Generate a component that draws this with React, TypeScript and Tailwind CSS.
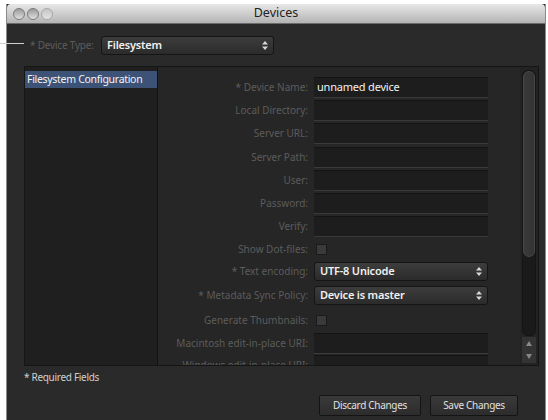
import React from 'react';

const font = { fontFamily: '"Noto Sans", "DejaVu Sans", sans-serif' };

const Arrows: React.FC = () => (
  <svg width="6" height="9" viewBox="0 0 6 9" className="shrink-0">
    <path d="M3 0 L6 3.5 L0 3.5 Z" fill="#d8d8d8" />
    <path d="M3 9 L6 5.5 L0 5.5 Z" fill="#d8d8d8" />
  </svg>
);

const Select: React.FC<{ value: string; className?: string }> = ({ value, className = '' }) => (
  <div
    className={`flex items-center justify-between h-[19px] px-[5px] rounded-[3px] border border-[#151515] bg-gradient-to-b from-[#3d3d3d] to-[#2b2b2b] text-[#f0f0f0] text-[11px] font-semibold tracking-[-0.2px] ${className}`}
  >
    <span>{value}</span>
    <Arrows />
  </div>
);

const Field: React.FC<{ label: string; h: string; children?: React.ReactNode }> = ({ label, h, children }) => (
  <div className={`flex items-center ${h}`}>
    <div className="w-[156px] pr-[6px] text-right text-[10px] text-[#5c5c5c] whitespace-nowrap">{label}</div>
    {children}
  </div>
);

const Input: React.FC<{ value?: string }> = ({ value }) => (
  <div className="w-[174px] h-[21px] bg-[#1d1d1d] border-t border-t-[#141414] border-b border-b-[#3a3a3a] flex items-center px-[3px] text-[11px] tracking-[-0.2px] text-[#f2f2f2]">
    {value}
  </div>
);

const Check: React.FC = () => (
  <div className="ml-[2px] w-[11px] h-[11px] bg-[#3a3a3a] border border-[#1a1a1a]" />
);

export default function App() {
  return (
    <div className="w-[548px] h-[420px] bg-white relative overflow-hidden" style={font}>
      <div className="absolute left-0 top-[43px] w-[24px] h-[1px] bg-[#cfcfcf] z-10" />
      <div className="ml-[6px] mt-[4px] w-[540px] h-[416px] flex flex-col bg-[#2a2a2a] border-l border-r border-[#8a8a8a]">
        {/* title bar */}
        <div className="relative h-[20px] flex items-center justify-center bg-gradient-to-b from-[#e8e8e8] to-[#b4b4b4] border-b border-[#6b6b6b] rounded-t-[4px]">
          <div className="absolute left-[6px] top-[4px] flex gap-[2px]">
            <div className="w-[12px] h-[12px] rounded-full bg-gradient-to-b from-[#9a9a9a] to-[#e0e0e0] border border-[#7a7a7a]" />
            <div className="w-[12px] h-[12px] rounded-full bg-gradient-to-b from-[#9a9a9a] to-[#e0e0e0] border border-[#7a7a7a]" />
            <div className="w-[12px] h-[12px] rounded-full bg-gradient-to-b from-[#c4c4c4] to-[#e4e4e4] border border-[#a8a8a8]" />
          </div>
          <span className="text-[12.5px] text-[#222]">Devices</span>
        </div>

        {/* device type */}
        <div className="flex items-center mt-[12px] h-[19px] pl-[23px]">
          <span className="text-[10px] tracking-[-0.2px] text-[#5c5c5c] w-[71px]">* Device Type:</span>
          <Select value="Filesystem" className="w-[173px]" />
        </div>

        {/* main panel */}
        <div className="mt-[11px] ml-[17px] mr-[6px] h-[300px] flex border border-[#151515]">
          <div className="w-[133px] bg-[#1f1f1f] border-r border-[#111] pt-[4px]">
            <div className="h-[17px] bg-[#3c5276] flex items-center px-[2px] text-[10.5px] tracking-[-0.3px] text-[#f4f4f4] whitespace-nowrap">Filesystem Configuration</div>
          </div>
          <div className="flex-1 bg-[#262626] overflow-hidden pt-[9px]">
            <Field h="h-[23px]" label="* Device Name:"><Input value="unnamed device" /></Field>
            <Field h="h-[23px]" label="Local Directory:"><Input /></Field>
            <Field h="h-[23px]" label="Server URL:"><Input /></Field>
            <Field h="h-[24px]" label="Server Path:"><Input /></Field>
            <Field h="h-[23px]" label="User:"><Input /></Field>
            <Field h="h-[23px]" label="Password:"><Input /></Field>
            <Field h="h-[23px]" label="Verify:"><Input /></Field>
            <Field h="h-[22px]" label="Show Dot-files:"><Check /></Field>
            <Field h="h-[23px]" label="* Text encoding:"><Select value="UTF-8 Unicode" className="w-[174px]" /></Field>
            <Field h="h-[25px]" label="* Metadata Sync Policy:"><Select value="Device is master" className="w-[174px]" /></Field>
            <Field h="h-[24px]" label="Generate Thumbnails:"><Check /></Field>
            <Field h="h-[22px]" label="Macintosh edit-in-place URI:"><Input /></Field>
            <Field h="h-[23px]" label="Windows edit-in-place URI:"><Input /></Field>
          </div>
          <div className="w-[18px] bg-[#232323] flex flex-col items-center pt-[3px] pb-[2px]">
            <div className="w-[14px] flex-1 flex flex-col bg-[#1a1a1a] rounded-[6px] border border-[#151515]">
              <div className="h-[186px] rounded-[6px] bg-gradient-to-r from-[#3a3a3a] to-[#333] border border-[#484848]" />
            </div>
            <div className="w-[14px] h-[26px] mt-[1px] bg-[#333] flex flex-col items-center justify-around">
              <svg width="6" height="5" viewBox="0 0 6 5"><path d="M3 0 L6 5 L0 5 Z" fill="#888" /></svg>
              <svg width="6" height="5" viewBox="0 0 6 5"><path d="M0 0 L6 0 L3 5 Z" fill="#888" /></svg>
            </div>
          </div>
        </div>

        <div className="mt-[4px] pl-[17px] text-[10px] tracking-[-0.3px] text-[#d0d0d0]">* Required Fields</div>

        <div className="flex justify-end gap-[9px] mt-[10px] pr-[27px]">
          <button className="w-[102px] h-[21px] rounded-[2px] border border-[#141414] bg-gradient-to-b from-[#3a3a3a] to-[#2c2c2c] text-[10px] tracking-[-0.3px] text-[#e0e0e0]">Discard Changes</button>
          <button className="w-[88px] h-[21px] rounded-[2px] border border-[#141414] bg-gradient-to-b from-[#3a3a3a] to-[#2c2c2c] text-[10px] tracking-[-0.3px] text-[#e0e0e0]">Save Changes</button>
        </div>
      </div>
    </div>
  );
}
